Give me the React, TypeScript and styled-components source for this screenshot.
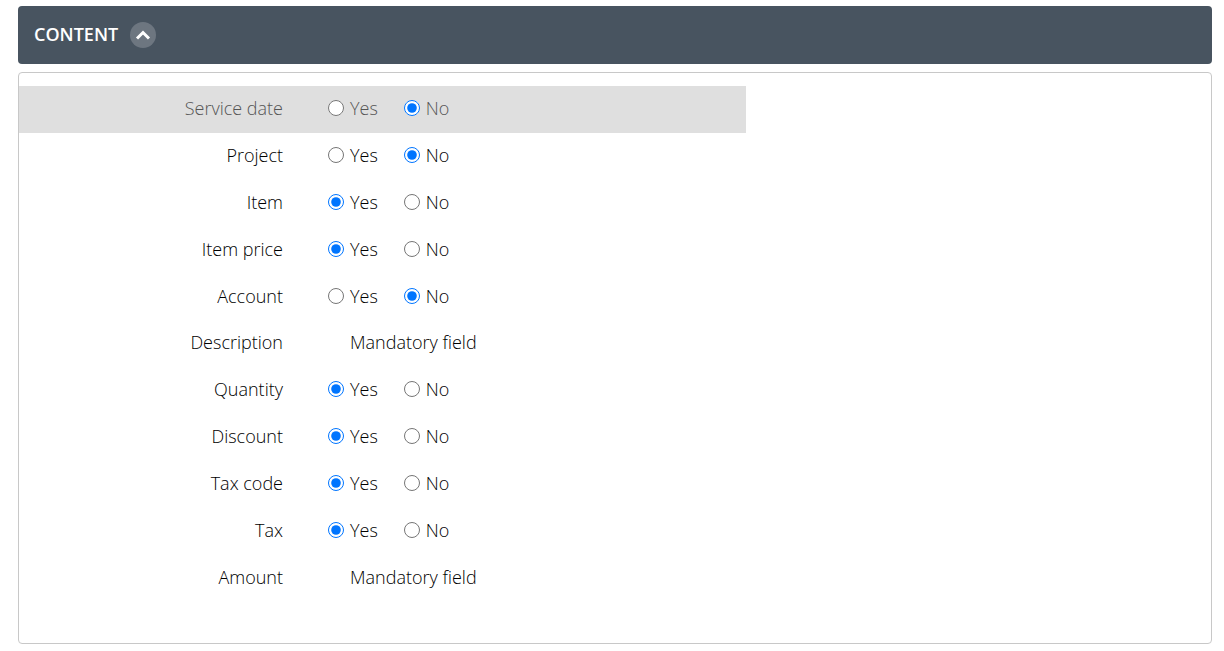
import React, { useState } from "react";
import styled, { createGlobalStyle } from "styled-components";

const GlobalStyle = createGlobalStyle`
  *, *::before, *::after { box-sizing: border-box; }
  body {
    margin: 0;
    background: #fff;
    color: #000;
    font-family: "Open Sans", sans-serif;
    font-size: 18px;
    font-weight: 300;
    line-height: 24px;
  }
`;

const Page = styled.main`
  padding: 6px 12px 7px 18px;
`;

const SectionHeader = styled.header`
  display: flex;
  align-items: center;
  gap: 12px;
  height: 58px;
  padding: 0 16px;
  border-radius: 4px;
  background: #485460;
  color: #fff;
`;

const SectionTitle = styled.h2`
  margin: 0;
  padding-bottom: 2px;
  font-size: 18px;
  font-weight: 600;
`;

const CollapseButton = styled.button`
  display: grid;
  place-items: center;
  width: 26px;
  height: 26px;
  padding: 0;
  border: 0;
  border-radius: 50%;
  background: #6d7680;
  color: #fff;
  cursor: pointer;
`;

const Panel = styled.section`
  margin-top: 8px;
  padding: 13px 0 41px;
  border: 1px solid #c8c8c8;
  border-radius: 4px;
`;

const Row = styled.div<{ $disabled?: boolean; $compact?: boolean }>`
  display: flex;
  align-items: center;
  width: 61%;
  min-height: ${(p) => (p.$compact ? 46 : 47)}px;
  padding-bottom: ${(p) => (p.$compact ? 4 : 3)}px;
  color: ${(p) => (p.$disabled ? "#555" : "#000")};
  background: ${(p) => (p.$disabled ? "#dfdfdf" : "transparent")};
`;

const RowLabel = styled.span`
  flex: 0 0 264px;
  text-align: right;
`;

const Options = styled.div`
  display: flex;
  gap: 26px;
  padding-left: 45px;
`;

const Option = styled.label`
  display: flex;
  align-items: center;
  gap: 6px;
`;

const Radio = styled.input`
  width: 16px;
  height: 16px;
  margin: 0;
`;

const Note = styled.span`
  padding-left: 67px;
`;

type Answer = "yes" | "no";
type Field = {
  id: string;
  label: string;
  answer?: Answer;
  disabled?: boolean;
  compact?: boolean;
};

const fields: Field[] = [
  { id: "service-date", label: "Service date", answer: "no", disabled: true },
  { id: "project", label: "Project", answer: "no" },
  { id: "item", label: "Item", answer: "yes" },
  { id: "item-price", label: "Item price", answer: "yes" },
  { id: "account", label: "Account", answer: "no" },
  { id: "description", label: "Description", compact: true },
  { id: "quantity", label: "Quantity", answer: "yes" },
  { id: "discount", label: "Discount", answer: "yes" },
  { id: "tax-code", label: "Tax code", answer: "yes" },
  { id: "tax", label: "Tax", answer: "yes" },
  { id: "amount", label: "Amount" },
];

function FieldRow({ id, label, answer, disabled, compact }: Field) {
  const labelId = `${id}-label`;
  return (
    <Row
      $disabled={disabled}
      $compact={compact}
      role={answer ? "radiogroup" : undefined}
      aria-labelledby={answer ? labelId : undefined}
    >
      <RowLabel id={labelId}>{label}</RowLabel>
      {answer ? (
        <Options>
          <Option>
            <Radio type="radio" name={id} value="yes" defaultChecked={answer === "yes"} />
            Yes
          </Option>
          <Option>
            <Radio type="radio" name={id} value="no" defaultChecked={answer === "no"} />
            No
          </Option>
        </Options>
      ) : (
        <Note>Mandatory field</Note>
      )}
    </Row>
  );
}

export default function App() {
  const [open, setOpen] = useState(true);
  return (
    <>
      <GlobalStyle />
      <Page>
        <SectionHeader>
          <SectionTitle>CONTENT</SectionTitle>
          <CollapseButton
            type="button"
            aria-label="Toggle content"
            aria-expanded={open}
            onClick={() => setOpen(!open)}
          >
            <svg width="16" height="10" viewBox="0 0 16 10" fill="none" stroke="currentColor" strokeWidth="3">
              <path d={open ? "M2 8.500 8 2.500 14 8.500" : "M2 1.500 8 7.500 14 1.500"} />
            </svg>
          </CollapseButton>
        </SectionHeader>
        {open && (
          <Panel>
            {fields.map((field) => (
              <FieldRow key={field.id} {...field} />
            ))}
          </Panel>
        )}
      </Page>
    </>
  );
}
